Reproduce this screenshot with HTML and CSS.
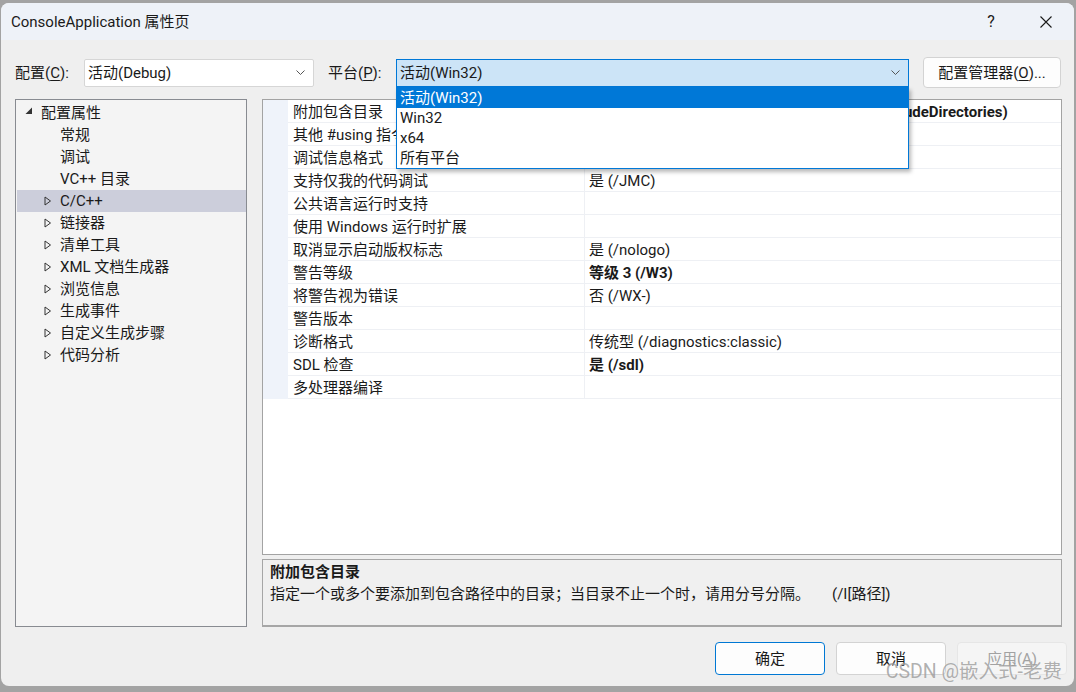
FILE: index.html
```html
<!DOCTYPE html>
<html lang="zh-CN">
<head>
<meta charset="utf-8">
<title>ConsoleApplication 属性页</title>
<link rel="stylesheet" href="styles.css">
</head>
<body>
<div class="window">
  <div class="titlebar">
    <span class="title">ConsoleApplication 属性页</span>
    <span class="tb-help">?</span>
    <span class="tb-close"><svg width="12" height="12" viewBox="0 0 12 12"><path d="M0.5 0.5L11.5 11.5M11.5 0.5L0.5 11.5" stroke="#1a1a1a" stroke-width="1.1" fill="none"/></svg></span>
  </div>

  <div class="toolbar">
    <span class="lbl lbl-config">配置(<u>C</u>):</span>
    <div class="combo combo-config">
      <span class="combo-text">活动(Debug)</span>
      <svg class="chev" width="9" height="5" viewBox="0 0 9 5"><path d="M0.5 0.5L4.5 4.5L8.5 0.5" stroke="#555" stroke-width="1" fill="none"/></svg>
    </div>
    <span class="lbl lbl-platform">平台(<u>P</u>):</span>
    <div class="combo combo-platform">
      <span class="combo-text">活动(Win32)</span>
      <svg class="chev" width="9" height="5" viewBox="0 0 9 5"><path d="M0.5 0.5L4.5 4.5L8.5 0.5" stroke="#555" stroke-width="1" fill="none"/></svg>
      <ul class="dropdown">
        <li class="dd-item selected">活动(Win32)</li>
        <li class="dd-item">Win32</li>
        <li class="dd-item">x64</li>
        <li class="dd-item">所有平台</li>
      </ul>
    </div>
    <button class="btn-manager">配置管理器(<u>O</u>)...</button>
  </div>

  <div class="main">
    <div class="tree">
      <div class="tree-row lvl0"><span class="toggle"><svg width="8" height="8" viewBox="0 0 8 8"><polygon points="7,0.5 7,7 0.5,7" fill="#333"/></svg></span>配置属性</div>
      <div class="tree-row lvl1"><span class="toggle"></span>常规</div>
      <div class="tree-row lvl1"><span class="toggle"></span>调试</div>
      <div class="tree-row lvl1"><span class="toggle"></span>VC++ 目录</div>
      <div class="tree-row lvl1 sel"><span class="toggle"><svg width="8" height="10" viewBox="0 0 8 10"><polygon points="1,1 6.5,5 1,9" fill="none" stroke="#333" stroke-width="1"/></svg></span>C/C++</div>
      <div class="tree-row lvl1"><span class="toggle"><svg width="8" height="10" viewBox="0 0 8 10"><polygon points="1,1 6.5,5 1,9" fill="none" stroke="#333" stroke-width="1"/></svg></span>链接器</div>
      <div class="tree-row lvl1"><span class="toggle"><svg width="8" height="10" viewBox="0 0 8 10"><polygon points="1,1 6.5,5 1,9" fill="none" stroke="#333" stroke-width="1"/></svg></span>清单工具</div>
      <div class="tree-row lvl1"><span class="toggle"><svg width="8" height="10" viewBox="0 0 8 10"><polygon points="1,1 6.5,5 1,9" fill="none" stroke="#333" stroke-width="1"/></svg></span>XML 文档生成器</div>
      <div class="tree-row lvl1"><span class="toggle"><svg width="8" height="10" viewBox="0 0 8 10"><polygon points="1,1 6.5,5 1,9" fill="none" stroke="#333" stroke-width="1"/></svg></span>浏览信息</div>
      <div class="tree-row lvl1"><span class="toggle"><svg width="8" height="10" viewBox="0 0 8 10"><polygon points="1,1 6.5,5 1,9" fill="none" stroke="#333" stroke-width="1"/></svg></span>生成事件</div>
      <div class="tree-row lvl1"><span class="toggle"><svg width="8" height="10" viewBox="0 0 8 10"><polygon points="1,1 6.5,5 1,9" fill="none" stroke="#333" stroke-width="1"/></svg></span>自定义生成步骤</div>
      <div class="tree-row lvl1"><span class="toggle"><svg width="8" height="10" viewBox="0 0 8 10"><polygon points="1,1 6.5,5 1,9" fill="none" stroke="#333" stroke-width="1"/></svg></span>代码分析</div>
    </div>

    <div class="right">
      <div class="grid">
        <div class="prop"><span class="gut"></span><span class="pname">附加包含目录</span><span class="pval bold">D:\code\include\common\src;%(AdditionalIncludeDirectories)</span></div>
        <div class="prop"><span class="gut"></span><span class="pname">其他 #using 指令</span><span class="pval"></span></div>
        <div class="prop"><span class="gut"></span><span class="pname">调试信息格式</span><span class="pval">程序数据库 (/Zi)</span></div>
        <div class="prop"><span class="gut"></span><span class="pname">支持仅我的代码调试</span><span class="pval">是 (/JMC)</span></div>
        <div class="prop"><span class="gut"></span><span class="pname">公共语言运行时支持</span><span class="pval"></span></div>
        <div class="prop"><span class="gut"></span><span class="pname">使用 Windows 运行时扩展</span><span class="pval"></span></div>
        <div class="prop"><span class="gut"></span><span class="pname">取消显示启动版权标志</span><span class="pval">是 (/nologo)</span></div>
        <div class="prop"><span class="gut"></span><span class="pname">警告等级</span><span class="pval bold">等级 3 (/W3)</span></div>
        <div class="prop"><span class="gut"></span><span class="pname">将警告视为错误</span><span class="pval">否 (/WX-)</span></div>
        <div class="prop"><span class="gut"></span><span class="pname">警告版本</span><span class="pval"></span></div>
        <div class="prop"><span class="gut"></span><span class="pname">诊断格式</span><span class="pval">传统型 (/diagnostics:classic)</span></div>
        <div class="prop"><span class="gut"></span><span class="pname">SDL 检查</span><span class="pval bold">是 (/sdl)</span></div>
        <div class="prop"><span class="gut"></span><span class="pname">多处理器编译</span><span class="pval"></span></div>
      </div>
      <div class="desc">
        <div class="desc-title">附加包含目录</div>
        <div class="desc-text">指定一个或多个要添加到包含路径中的目录；当目录不止一个时，请用分号分隔。<span class="desc-switch">(/I[路径])</span></div>
      </div>
    </div>
  </div>

  <div class="footer">
    <button class="btn btn-primary">确定</button>
    <button class="btn">取消</button>
    <button class="btn btn-disabled">应用(<u>A</u>)</button>
  </div>

  <div class="watermark">CSDN @嵌入式-老费</div>
</div>
</body>
</html>
```

FILE: styles.css
```css
* { box-sizing: border-box; }
html, body { margin: 0; padding: 0; }
body {
  background: #a3a3a3;
  width: 1076px;
  height: 692px;
  overflow: hidden;
  font-family: Roboto, "Noto Sans CJK SC", sans-serif;
  font-size: 15px;
  line-height: 20px;
  color: #1a1a1a;
}
u { text-decoration: underline; text-underline-offset: 2px; }

.window {
  position: relative;
  margin: 3px 0 0 1px;
  width: 1073px;
  height: 683px;
  background: #efefef;
  border-radius: 8px;
  overflow: hidden;
  display: flex;
  flex-direction: column;
}

/* title bar */
.titlebar {
  height: 37px;
  flex: none;
  background: #eef2f8;
  display: flex;
  align-items: center;
  padding-left: 10px;
}
.title { flex: 1; padding-top: 1px; }
.tb-help {
  width: 46px;
  text-align: center;
  font-size: 16px;
  margin-right: 9px;
}
.tb-close {
  width: 46px;
  height: 37px;
  margin-right: 5px;
  display: flex;
  align-items: center;
  justify-content: center;
}

/* toolbar */
.toolbar {
  margin-top: 17px;
  height: 31px;
  flex: none;
  display: flex;
  align-items: center;
  padding-left: 14px;
}
.lbl { flex: none; }
.lbl-config { width: 69px; }
.lbl-platform { width: 68px; margin-left: 14px; }
.combo {
  position: relative;
  height: 28px;
  flex: none;
  display: flex;
  align-items: center;
  padding-left: 3px;
  padding-right: 8px;
}
.combo-text { flex: 1; }
.combo-config {
  width: 230px;
  background: #ffffff;
  border: 1px solid #d6d6d6;
  border-radius: 2px;
}
.combo-platform {
  width: 513px;
  background: #cce4f7;
  border: 1px solid #0078d7;
}
.chev { flex: none; }
.dropdown {
  position: absolute;
  top: 27px;
  left: -1px;
  width: 513px;
  margin: 0;
  padding: 0;
  list-style: none;
  background: #ffffff;
  border: 1px solid #0078d7;
  box-shadow: 2px 3px 4px rgba(0, 0, 0, 0.28);
  z-index: 5;
}
.dd-item {
  height: 20px;
  line-height: 20px;
  padding-left: 3px;
}
.dd-item.selected { background: #0078d7; color: #ffffff; }
.btn-manager {
  margin-left: 14px;
  width: 138px;
  height: 31px;
  flex: none;
  font: inherit;
  color: inherit;
  background: #fdfdfd;
  border: 1px solid #d3d3d3;
  border-radius: 4px;
  padding: 0;
}

/* main */
.main {
  margin-top: 11px;
  height: 528px;
  flex: none;
  display: flex;
  padding-left: 14px;
}
.tree {
  width: 232px;
  flex: none;
  background: #f4f4f4;
  border: 1px solid #888b91;
  padding-top: 2px;
}
.tree-row {
  height: 22px;
  margin-left: 1px;
  display: flex;
  align-items: center;
  white-space: nowrap;
}
.tree-row.sel { background: #cccedb; }
.lvl0 { padding-left: 8px; }
.lvl1 { padding-left: 27px; }
.toggle {
  width: 16px;
  flex: none;
  display: flex;
  align-items: center;
}
.lvl0 .toggle svg { margin-top: -4px; }

.right {
  margin-left: 15px;
  width: 800px;
  flex: none;
  display: flex;
  flex-direction: column;
}
.grid {
  height: 456px;
  flex: none;
  background: #ffffff;
  border: 1px solid #a3a3a3;
  overflow: hidden;
}
.prop {
  display: flex;
  height: 23px;
}
.gut {
  width: 25px;
  flex: none;
  background: #eff3fa;
}
.pname, .pval {
  height: 23px;
  line-height: 24px;
  border-bottom: 1px solid #eef0f4;
  white-space: nowrap;
  overflow: hidden;
}
.pname {
  width: 297px;
  flex: none;
  padding-left: 5px;
  border-right: 1px solid #eef0f4;
}
.pval { flex: 1; padding-left: 4px; }
.bold { font-weight: bold; }

.desc {
  margin-top: 4px;
  height: 68px;
  flex: none;
  background: #f0f0f0;
  border: 1px solid #a6a6a6;
  border-bottom-width: 2px;
  padding: 1px 0 0 7px;
}
.desc-title { height: 22px; line-height: 22px; font-weight: bold; }
.desc-text { height: 22px; line-height: 22px; white-space: nowrap; }
.desc-switch { margin-left: 22px; }

/* footer */
.footer {
  margin-top: 15px;
  height: 33px;
  flex: none;
  display: flex;
  justify-content: flex-end;
  gap: 11px;
  padding-right: 7px;
}
.btn {
  width: 110px;
  height: 33px;
  font: inherit;
  color: #1a1a1a;
  background: #fdfdfd;
  border: 1px solid #d3d3d3;
  border-radius: 4px;
  padding: 0;
}
.btn-primary { border-color: #0078d4; }
.btn-disabled { background: #f5f5f5; border-color: #e6e6e6; color: #a2a2a2; }

.watermark {
  position: absolute;
  right: 12px;
  bottom: 2px;
  font-size: 19.5px;
  line-height: 24px;
  color: rgba(110, 110, 110, 0.55);
  text-shadow: 0 0 1px rgba(255, 255, 255, 0.6);
  white-space: nowrap;
}
```
